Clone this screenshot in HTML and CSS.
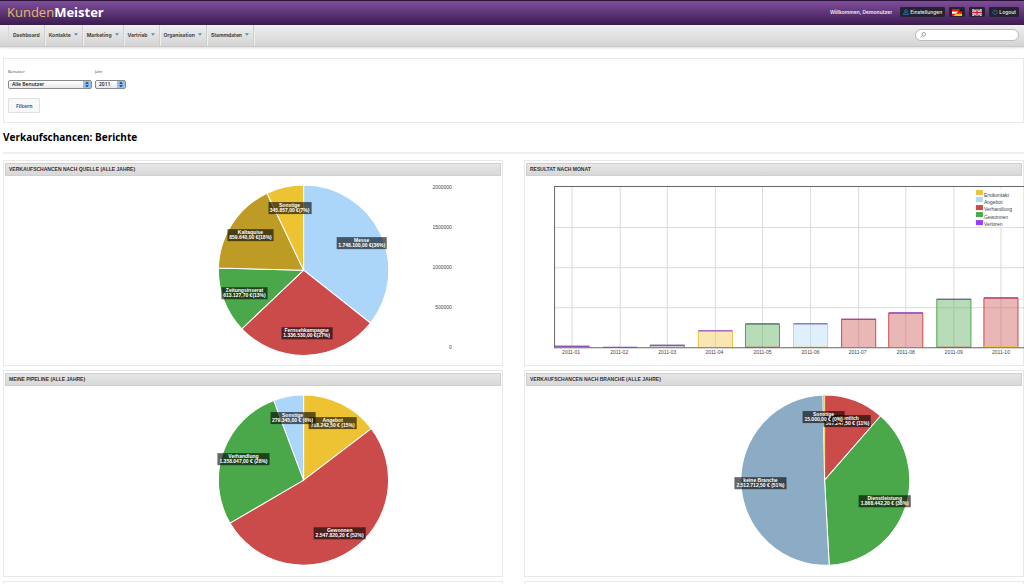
FILE: index.html
```html
<!DOCTYPE html>
<html lang="de">
<head>
<meta charset="utf-8">
<title>KundenMeister</title>
<link rel="stylesheet" href="styles.css">
</head>
<body>
<header class="topbar">
  <a class="logo" href="#"><span class="logo-light">Kunden</span><span class="logo-bold">Meister</span></a>
  <div class="account">
    <span class="welcome">Willkommen, Demonutzer</span>
    <a class="chip" href="#"><svg width="6" height="6" viewBox="0 0 12 12"><circle cx="6" cy="4" r="2.6" fill="none" stroke="#2a7ab8" stroke-width="1.6"/><path d="M1 11.2V9.5L3.5 7.5H8.5L11 9.5V11.2Z" fill="none" stroke="#2a7ab8" stroke-width="1.6"/></svg>Einstellungen</a>
    <a class="chip" href="#" aria-label="Deutsch"><svg width="10" height="7" viewBox="0 0 20 14"><path fill="#e01818" d="M0 0H20V14H0Z"/><path fill="#fff" d="M0 5H13L8 9.500H0Z"/><path fill="#111" d="M20 0V5H13L18 0Z"/><path fill="#e01818" d="M13 5H20V9.500H8Z"/><path fill="#f5c51c" d="M8 9.500H20V14H3Z"/></svg></a>
    <a class="chip" href="#" aria-label="English"><svg width="10" height="7" viewBox="0 0 20 14"><path fill="#28418c" d="M0 0H20V14H0Z"/><path d="M0 0L20 14M20 0L0 14" stroke="#fff" stroke-width="3"/><path d="M0 0L20 14M20 0L0 14" stroke="#d02238" stroke-width="1.200"/><path d="M10 0V14M0 7H20" stroke="#fff" stroke-width="5"/><path d="M10 0V14M0 7H20" stroke="#d02238" stroke-width="2.800"/></svg></a>
    <a class="chip" href="#"><svg width="6" height="6" viewBox="0 0 12 12" fill="none" stroke="#2a7ab8" stroke-width="1.600"><path d="M3.500 2.500A4.500 4.500 0 1 0 8.500 2.500M6 .5V6"/></svg>Logout</a>
  </div>
</header>
<nav class="nav">
  <ul class="menu">
    <li><a href="#">Dashboard</a></li>
    <li><a href="#">Kontakte<svg class="caret" viewBox="0 0 8 5"><path d="M0 0H8L4 5Z"/></svg></a></li>
    <li><a href="#">Marketing<svg class="caret" viewBox="0 0 8 5"><path d="M0 0H8L4 5Z"/></svg></a></li>
    <li><a href="#">Vertrieb<svg class="caret" viewBox="0 0 8 5"><path d="M0 0H8L4 5Z"/></svg></a></li>
    <li><a href="#">Organisation<svg class="caret" viewBox="0 0 8 5"><path d="M0 0H8L4 5Z"/></svg></a></li>
    <li><a href="#">Stammdaten<svg class="caret" viewBox="0 0 8 5"><path d="M0 0H8L4 5Z"/></svg></a></li>
  </ul>
  <label class="search"><svg width="6" height="6" viewBox="0 0 12 12" fill="none" stroke="#777" stroke-width="1.400"><circle cx="7.500" cy="4.500" r="3.500"/><path d="M5 7L1 11"/></svg><input type="search" aria-label="Suche"></label>
</nav>
<main class="page">
  <form class="filter">
    <div class="fields">
      <div class="field"><label for="user">Benutzer</label>
        <span class="select wide"><select id="user"><option>Alle Benutzer</option></select><svg viewBox="0 0 8 10"><path d="M4 1L6.500 4H1.500ZM4 9L6.500 6H1.500Z"/></svg></span></div>
      <div class="field"><label for="year">Jahr</label>
        <span class="select"><select id="year"><option>2011</option></select><svg viewBox="0 0 8 10"><path d="M4 1L6.500 4H1.500ZM4 9L6.500 6H1.500Z"/></svg></span></div>
    </div>
    <button class="submit" type="button">Filtern</button>
  </form>
  <h1 class="title">Verkaufschancen: Berichte</h1>
  <div class="grid">
    <section class="panel">
      <h2>Verkaufschancen nach Quelle (alle Jahre)</h2>
      <svg class="chart" viewBox="0 0 495 187">
        <g class="pie" transform="translate(298 94)">
          <path fill="#acd6f9" d="M0 0V-85A85 85 0 0 1 66.700 52.700Z"/>
          <path fill="#cb4b4b" d="M0 0L66.700 52.700A85 85 0 0 1 -61.700 58.500Z"/>
          <path fill="#4aa74a" d="M0 0L-61.700 58.500A85 85 0 0 1 -85 -2.200Z"/>
          <path fill="#bd9b25" d="M0 0L-85 -2.200A85 85 0 0 1 -36.500 -76.800Z"/>
          <path fill="#edc233" d="M0 0L-36.500 -76.800A85 85 0 0 1 0 -85Z"/>
        </g>
        <g class="tag" transform="translate(331 61)"><rect width="50" height="12"/><text x="25" y="5">Messe</text><text x="25" y="10">1.748.100,00 €(36%)</text></g>
        <g class="tag" transform="translate(276 151)"><rect width="51" height="12"/><text x="25" y="5">Fernsehkampagne</text><text x="25" y="10">1.336.530,00 €(27%)</text></g>
        <g class="tag" transform="translate(216 111)"><rect width="46" height="12"/><text x="23" y="5">Zeitungsinserat</text><text x="23" y="10">613.127,70 €(13%)</text></g>
        <g class="tag" transform="translate(222 53)"><rect width="46" height="12"/><text x="23" y="5">Kaltaquise</text><text x="23" y="10">859.640,00 €(18%)</text></g>
        <g class="tag" transform="translate(263 26)"><rect width="43" height="12"/><text x="21" y="5">Sonstige</text><text x="21" y="10">345.857,00 €(7%)</text></g>
        <g class="ticks end"><text x="446" y="13">2000000</text><text x="446" y="53">1500000</text><text x="446" y="93">1000000</text><text x="446" y="133">500000</text><text x="446" y="173">0</text></g>
      </svg>
    </section>
    <section class="panel">
      <h2>Resultat nach Monat</h2>
      <svg class="chart" viewBox="0 0 495 187">
        <path class="gridlines" d="M46 11V171M94 11V171M141 11V171M189 11V171M236 11V171M284 11V171M332 11V171M379 11V171M427 11V171M474 11V171M29 51.500H520M29 91.500H520M29 131.500H520"/>
        <g class="bars">
          <path class="gray" d="M29 171V170H63V171"/><path class="gray" d="M124 171V169H158V171"/>
          <path class="yellow" d="M172 171V155H206V171"/>
          <path class="green" d="M219 171V148H253V171"/>
          <path class="blue" d="M267 171V148H301V171"/>
          <path class="red" d="M315 171V143H349V171"/>
          <path class="red" d="M362 171V137H396V171"/>
          <path class="green" d="M410 171V123H444V171"/>
          <path class="red" d="M457 171V122H491V171"/>
        </g>
        <path class="lost" d="M29 170H63M77 171H111M124 169H158M172 154.500H206M219 147.500H253M267 147.500H301M315 143H349M362 136.500H396M410 123H444M457 121.500H491"/>
        <path fill="none" stroke="#cb4b4b" d="M219 171H253M410 171H444"/><path fill="none" stroke="#edc240" d="M267 171H301M457 170H491"/>
        <path class="frame" d="M520 10.500H28.500V171.500H520"/>
        <g class="ticks mid"><text x="45" y="178">2011-01</text><text x="93" y="178">2011-02</text><text x="141" y="178">2011-03</text><text x="188" y="178">2011-04</text><text x="236" y="178">2011-05</text><text x="284" y="178">2011-06</text><text x="331" y="178">2011-07</text><text x="379" y="178">2011-08</text><text x="427" y="178">2011-09</text><text x="474" y="178">2011-10</text></g>
        <rect x="449" y="13" width="36" height="38" fill="#fff" fill-opacity=".85"/>
        <g class="legend"><rect x="449" y="14" fill="#edc240"/><rect x="449" y="21" fill="#afd8f8"/><rect x="449" y="29" fill="#cb4b4b"/><rect x="449" y="36" fill="#4da74d"/><rect x="449" y="44" fill="#9440ed"/></g>
        <g class="ticks"><text x="457" y="21">Erstkontakt</text><text x="457" y="28">Angebot</text><text x="457" y="35">Verhandlung</text><text x="457" y="43">Gewonnen</text><text x="457" y="50">Verloren</text></g>
      </svg>
    </section>
    <section class="panel">
      <h2>Meine Pipeline (alle Jahre)</h2>
      <svg class="chart" viewBox="0 0 495 187">
        <g class="pie" transform="translate(298 94)">
          <path fill="#edc233" d="M0 0V-85A85 85 0 0 1 67.600 -51.500Z"/>
          <path fill="#cb4b4b" d="M0 0L67.600 -51.500A85 85 0 1 1 -73.500 42.800Z"/>
          <path fill="#4aa74a" d="M0 0L-73.500 42.800A85 85 0 0 1 -29.800 -79.600Z"/>
          <path fill="#acd6f9" d="M0 0L-29.800 -79.600A85 85 0 0 1 0 -85Z"/>
        </g>
        <g class="tag" transform="translate(303 31)"><rect width="48" height="12"/><text x="24" y="5">Angebot</text><text x="24" y="10">718.242,50 € (15%)</text></g>
        <g class="tag" transform="translate(308 141)"><rect width="52" height="12"/><text x="26" y="5">Gewonnen</text><text x="26" y="10">2.547.820,20 € (52%)</text></g>
        <g class="tag" transform="translate(212 67)"><rect width="52" height="12"/><text x="26" y="5">Verhandlung</text><text x="26" y="10">1.358.047,00 € (28%)</text></g>
        <g class="tag" transform="translate(265 26)"><rect width="45" height="12"/><text x="22" y="5">Sonstige</text><text x="22" y="10">279.345,00 € (6%)</text></g>
      </svg>
    </section>
    <section class="panel">
      <h2>Verkaufschancen nach Branche (alle Jahre)</h2>
      <svg class="chart" viewBox="0 0 495 187">
        <g class="pie" transform="translate(298 94)">
          <path fill="#cb4b4b" d="M0 0V-85A85 85 0 0 1 55.800 -64.100Z"/>
          <path fill="#4aa74a" d="M0 0L55.800 -64.100A85 85 0 0 1 4.600 84.900Z"/>
          <path fill="#8cacc6" d="M0 0L4.600 84.900A85 85 0 0 1 -1.700 -85Z"/>
        </g>
        <path fill="#edc233" d="M298 94L296.500 9H298Z"/>
        <g class="tag" transform="translate(297 29)"><rect width="47" height="12"/><text x="24" y="5">öffentlich</text><text x="24" y="10">567.247,50 € (11%)</text></g>
        <g class="tag" transform="translate(332 109)"><rect width="52" height="12"/><text x="26" y="5">Dienstleistung</text><text x="26" y="10">1.868.442,20 € (38%)</text></g>
        <g class="tag" transform="translate(208 91)"><rect width="52" height="12"/><text x="26" y="5">keine Branche</text><text x="26" y="10">2.512.712,50 € (51%)</text></g>
        <g class="tag" transform="translate(276 25)"><rect width="42" height="12"/><text x="21" y="5">Sonstige</text><text x="21" y="10">15.000,00 € (0%)</text></g>
      </svg>
    </section>
    <section class="panel"><h2></h2></section>
    <section class="panel"><h2></h2></section>
  </div>
</main>
</body>
</html>
```
FILE: styles.css
```css
* { box-sizing: border-box; }
html { height: 100%; overflow: hidden; }
body { margin: 0; min-height: 100%; background: #fff; color: #333; font: 5px/6px "Liberation Sans", Arial, sans-serif; }
a { color: inherit; text-decoration: none; }
svg { flex: none; }

.topbar { display: flex; align-items: center; justify-content: space-between; height: 25px; padding: 0 5px 1px 7px; border-top: 1px solid #2b1238; border-bottom: 1px solid #2e123c; background: linear-gradient(#7f4e9b, #3f1d55); }
.logo { font: 13px/20px "Open Sans", sans-serif; }
.logo-light { color: #e0bc62; font-weight: 400; }
.logo-bold { color: #fff; font-weight: 700; }
.account { display: flex; align-items: center; gap: 4px; color: #eee; }
.welcome { margin-right: 4px; font: 600 5px/6px Inter, sans-serif; }
.chip { display: flex; align-items: center; gap: 1px; height: 10px; padding: 0 2px; border: 1px solid #2a2135; border-radius: 1px; background: #24222a; font: 500 5px/6px Inter, sans-serif; }

.nav { display: flex; align-items: center; justify-content: space-between; height: 22px; padding: 0 5px 0 8px; background: linear-gradient(#efefef, #d4d4d4); border-bottom: 1px solid #c8c8c8; box-shadow: 0 1px 2px #ddd; }
.menu { display: flex; height: 100%; margin: 0; padding: 0; list-style: none; border-left: 1px solid #d8d8d8; }
.menu li { display: flex; border-right: 1px solid #cfcfcf; box-shadow: 1px 0 #eee; }
.menu a { display: flex; align-items: center; gap: 3px; padding: 0 4px 2px; color: #444; font: 700 5px/6px Inter, sans-serif; }
.caret { width: 4px; height: 3px; fill: #4a90d0; }
.search { display: flex; align-items: center; width: 104px; height: 12px; margin-bottom: 1px; padding: 0 4px; border: 1px solid #bbb; border-radius: 6px; background: #fff; }
.search input { flex: 1; min-width: 0; height: 8px; padding: 0; border: 0; outline: 0; background: none; font-size: 5px; }

.page { padding: 11px 0 0 3px; overflow: hidden; }
.filter { height: 65px; padding: 10px 4px; border: 1px solid #e9e9e9; }
.fields { display: flex; gap: 3px; }
.field { display: flex; flex-direction: column; gap: 5px; }
.field label { color: #444; font: 4px/6px "Open Sans", sans-serif; }
.select { display: flex; height: 9px; border: 1px solid #888; border-radius: 2px; background: linear-gradient(#fff, #e8e8e8); overflow: hidden; }
.wide { width: 84px; }
.select select { flex: 1; appearance: none; min-width: 21px; padding: 0 3px; border: 0; background: none; color: #111; font: 600 5px/7px "Open Sans", sans-serif; }
.select svg { width: 8px; height: 7px; background: #8dc0f0; fill: #15304c; }
.submit { display: block; height: 15px; margin-top: 9px; padding: 0 7px; border: 1px solid #e0e0e0; border-radius: 1px; background: #f8f8f8; color: #2467a8; font: 700 5px/6px "Open Sans", sans-serif; }

.title { margin: 0; padding: 6px 0 7px; border-bottom: 2px solid #eee; color: #000; font: 700 10px/16px "Open Sans", sans-serif; }
.grid { display: grid; grid-template-columns: 1fr 1fr; gap: 4px 21px; margin-top: 6px; }
.panel { min-width: 0; padding: 2px 1px; border: 1px solid #e9e9e9; }
.panel h2 { height: 13px; margin: 0; padding: 0 3px; border: 1px solid #d0d0d0; background: linear-gradient(#e6e6e6, #d8d8d8); color: #333; font: 700 5px/11px "Liberation Sans", Arial, sans-serif; text-transform: uppercase; }
.chart { display: block; width: 100%; overflow: visible; }
.pie path { stroke: #fff; stroke-width: 1; stroke-linejoin: round; }
.tag rect { fill: #000; fill-opacity: .6; }
.tag text { fill: #fff; font-size: 5px; font-weight: 700; text-anchor: middle; }
.ticks text { fill: #444; font-size: 5px; }
.end text { text-anchor: end; }
.mid text { text-anchor: middle; }
.gridlines { fill: none; stroke: #000; stroke-opacity: .14; }
.frame { fill: none; stroke: #666; }
.bars path { fill-opacity: .4; stroke-width: 1; }
.gray { fill: #888; stroke: #888; }
.yellow { fill: #edc240; stroke: #edc240; }
.green { fill: #4da74d; stroke: #4da74d; }
.blue { fill: #afd8f8; stroke: #afd8f8; }
.red { fill: #cb4b4b; stroke: #cb4b4b; }
.lost { fill: none; stroke: #8a3fc4; }
.legend rect { width: 7px; height: 5px; }
```
